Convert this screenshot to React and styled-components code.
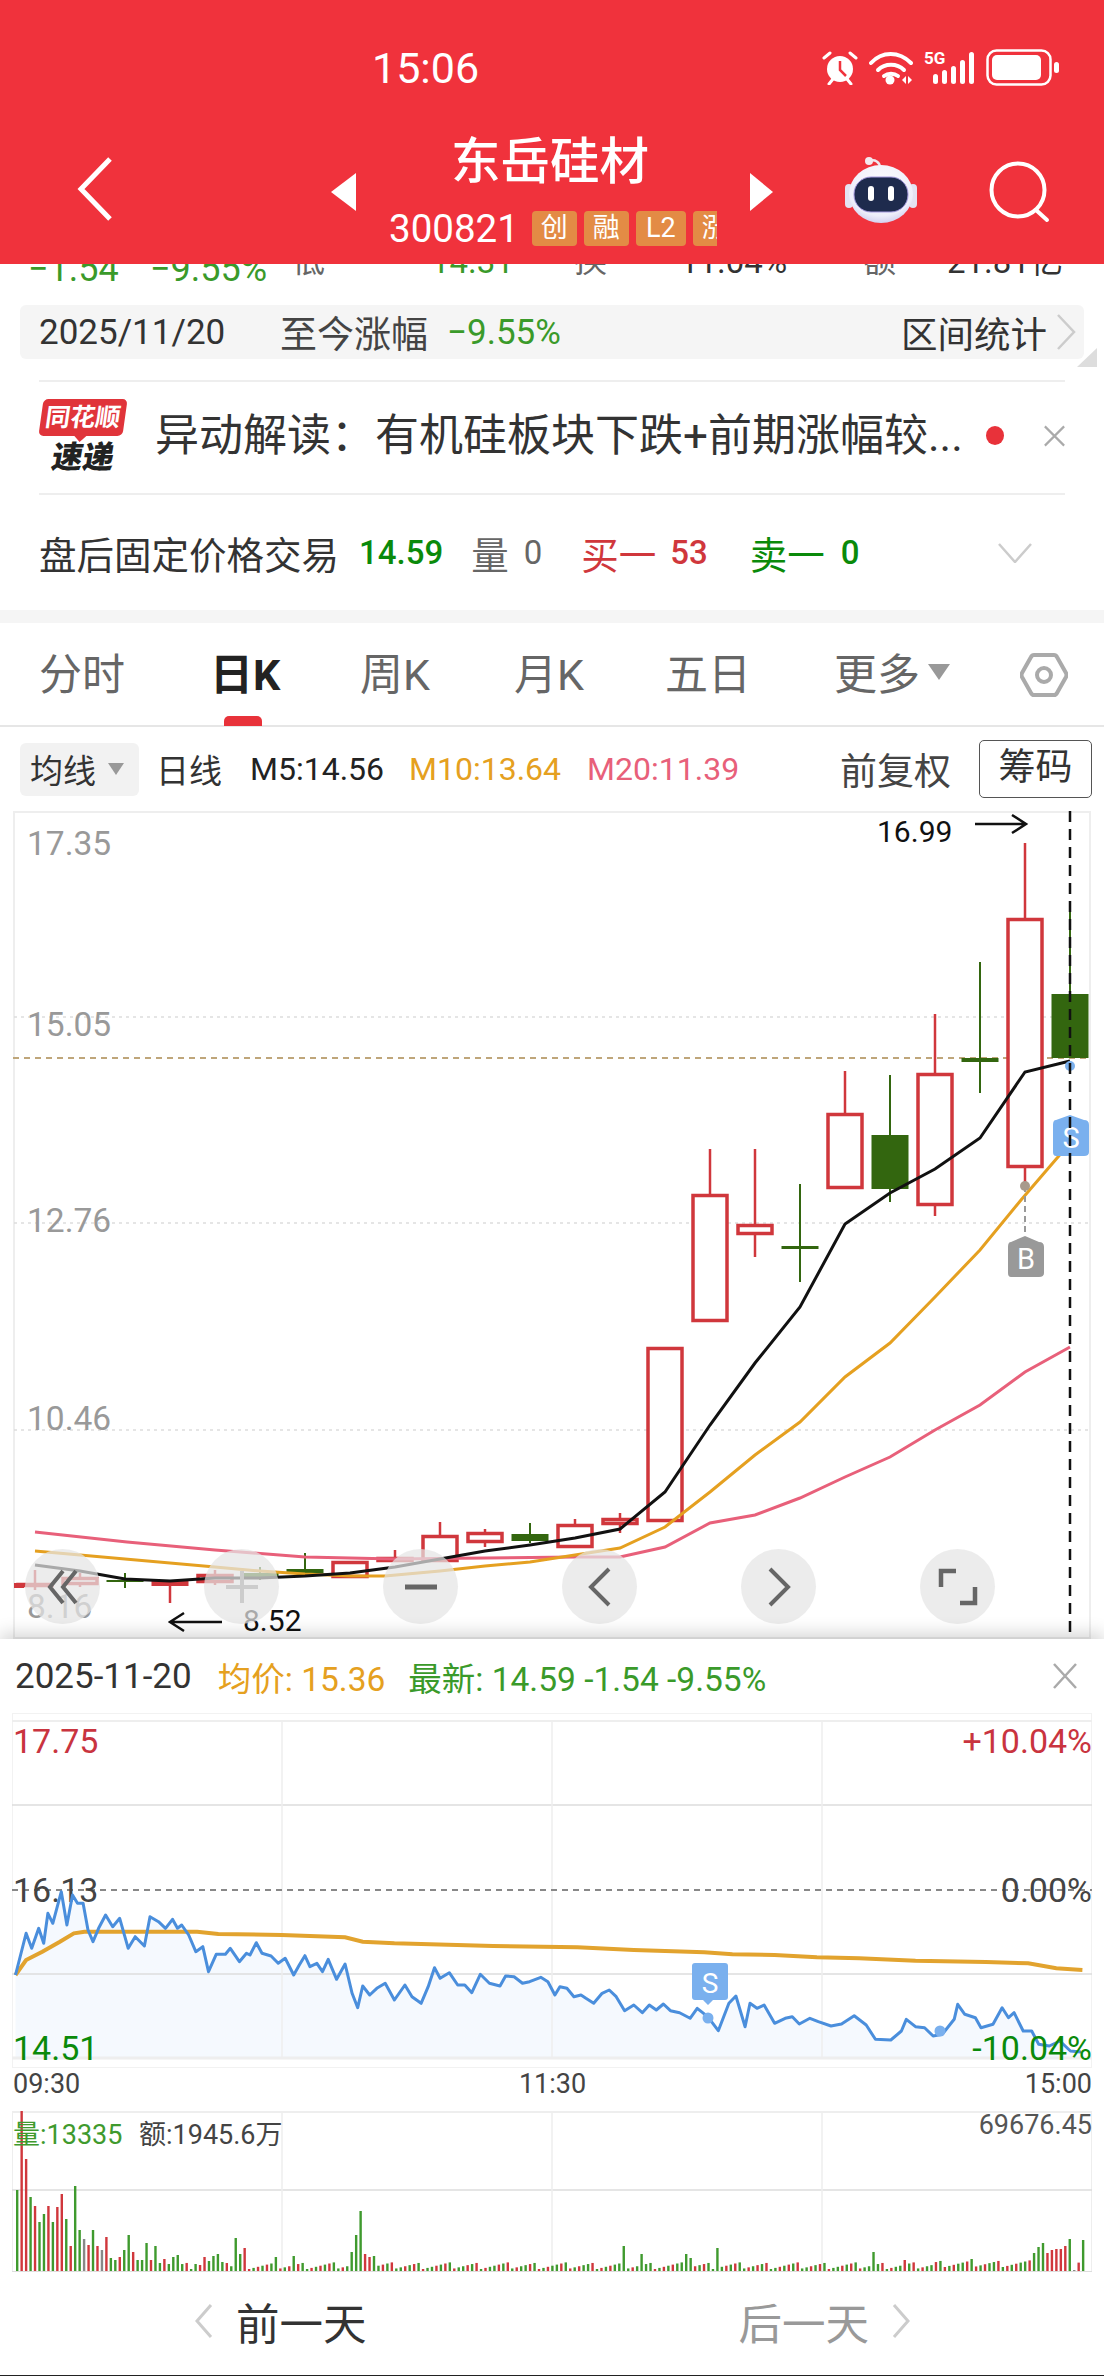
import React from 'react';
import styled, { createGlobalStyle } from 'styled-components';

const RED = '#d0373c';
const GREEN = '#33660f';
const FONT = 'Roboto, "Noto Sans CJK SC", sans-serif';

const GlobalStyle = createGlobalStyle`
  html, body { margin: 0; padding: 0; background: #fff; }
  body { font-family: ${FONT}; }
  * { box-sizing: border-box; }
`;

const Page = styled.div`
  width: 1104px;
  height: 2376px;
  overflow: hidden;
  display: flex;
  flex-direction: column;
  background: #fff;
  color: #333;
`;

const Header = styled.header`
  height: 264px;
  background: #f0323c;
  color: #fff;
  flex: none;
`;

const StatusBar = styled.div`
  height: 130px;
  display: flex;
  justify-content: space-between;
  align-items: flex-start;
  padding: 44px 44px 0 372px;
`;

const Clock = styled.span`
  font-size: 43px;
  line-height: 48px;
`;

const StatusIcons = styled.div`
  display: flex;
  align-items: flex-start;
  padding-top: 5px;
`;

const NavBar = styled.div`
  display: flex;
  align-items: flex-start;
  padding-left: 77px;
`;

const NavIcon = styled.svg`
  flex: none;
  margin-top: ${p => p.$top}px;
  margin-left: ${p => p.$left || 0}px;
`;

const TitleBlock = styled.div`
  width: 394px;
  flex: none;
  display: flex;
  flex-direction: column;
  align-items: center;
`;

const Title = styled.div`
  font-size: 49.5px;
  line-height: 56px;
  font-weight: 500;
  margin-top: 4px;
  margin-left: -6px;
`;

const CodeRow = styled.div`
  width: 328px;
  height: 35px;
  margin-top: 21px;
  display: flex;
  align-items: center;
  overflow: hidden;
  font-size: 38.5px;
  gap: 7px;
`;

const Code = styled.span`
  margin-right: 6px;
  flex: none;
`;

const Badge = styled.span`
  flex: none;
  width: ${p => p.$wide ? 50 : 45}px;
  height: 35px;
  border-radius: 4px;
  background: #e38b45;
  font-size: 27px;
  line-height: 35px;
  text-align: center;
  color: #fff;
`;

const ClippedRow = styled.div`
  height: 20px;
  flex: none;
  overflow: hidden;
  display: grid;
  grid-template-columns: 122px 142px 139px 143px 106px 183px 84px 1fr;
  grid-template-rows: 20px;
  align-items: end;
  padding-left: 28px;
  font-size: 33px;
`;

const ClippedCell = styled.span`
  line-height: 34px;
  font-size: ${p => p.$size || 33}px;
  white-space: nowrap;
  margin-bottom: ${p => p.$drop}px;
  color: ${p => p.$color || '#333'};
`;

const RangeBar = styled.div`
  height: 54px;
  flex: none;
  margin: 21px 20px 0;
  background: #f5f5f5;
  border-radius: 6px;
  display: flex;
  align-items: center;
  padding: 0 7px 0 19px;
  position: relative;
  font-size: 35px;
`;

const RangeDate = styled.span`
  width: 241px;
  color: #333;
`;

const RangeLabel = styled.span`
  font-size: 37px;
  color: #444;
`;

const RangeValue = styled.span`
  margin-left: 19px;
  color: #3a9a2a;
  font-size: 35px;
`;

const RangeStats = styled.span`
  margin-left: auto;
  font-size: 36.5px;
  color: #333;
`;

const CornerMark = styled.span`
  position: absolute;
  right: -13px;
  bottom: -8px;
  width: 0;
  height: 0;
  border-left: 20px solid transparent;
  border-bottom: 19px solid #ddd;
`;

const Divider = styled.div`
  height: 2px;
  flex: none;
  margin: 21px 39px 0;
  background: #eee;
`;

const NoticeRow = styled.div`
  height: 113px;
  flex: none;
  margin: 0 39px;
  border-bottom: 2px solid #eee;
  display: flex;
  align-items: center;
  padding-bottom: 4px;
`;

const Logo = styled.div`
  width: 88px;
  flex: none;
  display: flex;
  flex-direction: column;
  align-items: center;
`;

const LogoBubble = styled.div`
  width: 84px;
  height: 37px;
  background: #e0343a;
  border-radius: 5px;
  color: #fff;
  transform: skewX(-8deg);
  font-size: 25px;
  line-height: 37px;
  font-weight: 700;
  text-align: center;
  white-space: nowrap;
  position: relative;
  &::after {
    content: '';
    position: absolute;
    left: 35px;
    bottom: -6px;
    border-left: 7px solid transparent;
    border-right: 7px solid transparent;
    border-top: 7px solid #e0343a;
  }
`;

const LogoText = styled.div`
  margin-top: 7px;
  color: #222;
  font-size: 31px;
  line-height: 30px;
  font-weight: 900;
  transform: skewX(-10deg);
`;

const NoticeText = styled.div`
  margin-left: 28px;
  width: 815px;
  flex: none;
  font-size: 44px;
  line-height: 50px;
  white-space: nowrap;
  color: #333;
`;

const Dot = styled.span`
  width: 18px;
  height: 19px;
  margin-left: 16px;
  flex: none;
  border-radius: 50%;
  background: #e8323a;
`;

const TradeRow = styled.div`
  height: 115px;
  flex: none;
  display: flex;
  align-items: center;
  padding: 0 72px 0 39px;
  font-size: 33px;
  position: relative;
`;

const TradeLabel = styled.span`
  font-size: 37.5px;
  color: ${p => p.$color || '#333'};
  margin-left: ${p => p.$left || 0}px;
`;

const TradeValue = styled.span`
  color: ${p => p.$color};
  font-weight: ${p => p.$bold ? 500 : 400};
  margin-left: ${p => p.$left}px;
`;

const Band = styled.div`
  height: 13px;
  flex: none;
  background: #f5f5f5;
`;

const Tabs = styled.div`
  height: 104px;
  flex: none;
  border-bottom: 2px solid #e6e6e6;
  display: grid;
  grid-template-columns: 171px 150px 154px 151px 169px 186px 1fr;
  align-items: center;
  padding: 2px 39px 0 39px;
`;

const Tab = styled.div`
  position: relative;
  font-size: 43px;
  line-height: 52px;
  font-weight: ${p => p.$active ? 700 : 400};
  color: ${p => p.$active ? '#222' : '#666'};
  display: flex;
  align-items: center;
  &::after {
    content: '';
    display: ${p => p.$active ? 'block' : 'none'};
    position: absolute;
    left: 14px;
    bottom: -25px;
    width: 38px;
    height: 10px;
    border-radius: 5px 5px 0 0;
    background: #e8323a;
  }
`;

const Caret = styled.span`
  width: 0;
  height: 0;
  margin-left: ${p => p.$left}px;
  margin-top: ${p => p.$top || 0}px;
  border-left: ${p => p.$size}px solid transparent;
  border-right: ${p => p.$size}px solid transparent;
  border-top: ${p => p.$size * 1.5}px solid #999;
`;

const MaRow = styled.div`
  height: 84px;
  flex: none;
  display: flex;
  align-items: center;
  padding: 0 12px 0 20px;
  font-size: 32px;
`;

const MaSelect = styled.div`
  width: 119px;
  height: 53px;
  background: #f2f2f2;
  border-radius: 6px;
  display: flex;
  align-items: center;
  padding-left: 10px;
  font-size: 33px;
  color: #333;
`;

const MaLabel = styled.span`
  font-size: 33px;
  margin-left: 17px;
  color: #333;
`;

const MaValue = styled.span`
  color: ${p => p.$color};
  margin-left: ${p => p.$left}px;
`;

const AdjustLabel = styled.span`
  margin-left: auto;
  font-size: 37px;
  color: #444;
`;

const ChipButton = styled.div`
  width: 113px;
  height: 58px;
  margin-left: 28px;
  border: 1px solid #555;
  border-radius: 5px;
  font-size: 37px;
  line-height: 54px;
  text-align: center;
  color: #333;
`;

const ChartArea = styled.div`
  position: relative;
  height: 828px;
  flex: none;
`;

const Plot = styled.svg`
  display: block;
  font-family: ${FONT};
`;

const ChartControls = styled.div`
  position: absolute;
  left: 25px;
  top: 738px;
  display: flex;
  gap: 104px;
`;

const ControlButton = styled.div`
  width: 75px;
  height: 75px;
  border-radius: 50%;
  background: rgba(228, 228, 228, 0.72);
  display: flex;
  align-items: center;
  justify-content: center;
`;

const DetailPanel = styled.section`
  position: relative;
  flex: none;
  background: #fff;
  box-shadow: 0 -6px 16px rgba(0, 0, 0, 0.16);
`;

const DetailHead = styled.div`
  height: 74px;
  display: flex;
  align-items: center;
  padding: 0 27px 0 15px;
  font-size: 33.5px;
`;

const DetailDate = styled.span`
  font-size: 35px;
  color: #333;
`;

const DetailStat = styled.span`
  margin-left: ${p => p.$left}px;
  color: ${p => p.$color};
  white-space: nowrap;
`;

const CloseIcon = styled.svg`
  margin-left: auto;
  flex: none;
`;

const TimeAxis = styled.div`
  height: 43px;
  display: flex;
  justify-content: space-between;
  padding: 0 12px 0 13px;
  font-size: 27px;
  line-height: 32px;
  color: #444;
`;

const Footer = styled.div`
  height: 101px;
  border-bottom: 1px solid #222;
  display: flex;
  align-items: center;
  padding: 0 0 8px 194px;
  font-size: 43.5px;
`;

const DayButton = styled.div`
  display: flex;
  align-items: center;
  gap: ${p => p.$gap}px;
  margin-left: ${p => p.$left || 0}px;
  color: ${p => p.$muted ? '#999' : '#333'};
`;

// candles: x, wick top, wick bottom, body top, body bottom, colour
const candles = [
  [35, 1570, 1590, 1583, 1587, 'r'],
  [80, 1573, 1587, 1577, 1585, 'r'],
  [125, 1573, 1588, 1580, 1582, 'g'],
  [170, 1580, 1603, 1580, 1586, 'rf'],
  [215, 1570, 1585, 1574, 1583, 'r'],
  [260, 1567, 1580, 1573, 1577, 'g'],
  [305, 1553, 1575, 1569, 1573, 'g'],
  [350, 1561, 1578, 1561, 1578, 'r'],
  [395, 1550, 1562, 1557, 1562, 'r'],
  [440, 1522, 1562, 1535, 1562, 'r'],
  [485, 1529, 1547, 1532, 1543, 'r'],
  [530, 1523, 1543, 1534, 1541, 'g'],
  [575, 1519, 1548, 1524, 1548, 'r'],
  [620, 1513, 1533, 1518, 1525, 'r'],
  [665, 1347, 1522, 1347, 1522, 'r'],
  [710, 1149, 1322, 1194, 1322, 'r'],
  [755, 1149, 1257, 1224, 1235, 'r'],
  [800, 1184, 1282, 1246, 1249, 'g'],
  [845, 1071, 1189, 1113, 1189, 'r'],
  [890, 1075, 1202, 1135, 1189, 'g'],
  [935, 1014, 1216, 1073, 1206, 'r'],
  [980, 962, 1093, 1058, 1062, 'g'],
  [1025, 843, 1186, 918, 1168, 'r'],
  [1070, 907, 1058, 994, 1058, 'g'],
];

const ma5 = '35,1565 80,1571 125,1579 170,1581 215,1578 260,1578 305,1576 350,1573 395,1567 440,1559 485,1551 530,1545 575,1538 620,1529 665,1492 710,1425 755,1363 800,1307 845,1224 890,1193 935,1169 980,1138 1025,1072 1070,1061';
const ma10 = '35,1551 215,1567 260,1571 305,1574 350,1576 385,1576 440,1571 485,1566 530,1562 575,1555 620,1548 665,1527 710,1492 755,1455 800,1422 845,1377 890,1343 935,1297 980,1250 1021,1200 1070,1143';
const ma20 = '35,1532 127,1542 215,1550 305,1557 395,1559 485,1558 575,1557 620,1557 665,1547 710,1523 755,1515 800,1498 845,1477 890,1457 935,1430 980,1405 1025,1372 1070,1347';

// intraday price as traced: x scale 1.42, y scale 3 from 1620
const pricePts = [
  22,1065, 37,940, 45,985, 55,925, 62,970, 68,880, 75,910, 87,815, 95,915, 103,825, 110,850, 118,850, 125,930, 132,965, 140,925, 150,885, 160,920, 170,895, 182,985, 192,950, 205,978, 213,890, 225,905, 235,925, 245,898, 252,925, 258,915, 268,945, 278,995, 288,980, 296,1055, 307,1003, 320,1003, 327,985, 340,1025, 350,1000, 355,1005, 364,968, 372,1000, 385,1008, 395,1030, 405,1015, 417,1065, 425,1035, 433,1007, 440,1040, 450,1030, 458,1055, 466,1018, 478,1078, 490,1032, 500,1120, 508,1163, 515,1098, 525,1125, 535,1105, 547,1090, 560,1140, 575,1095, 585,1130, 598,1150, 608,1100, 617,1043, 625,1075, 638,1058, 650,1095, 660,1095, 670,1118, 682,1063, 695,1090, 710,1098, 718,1068, 730,1070, 742,1090, 752,1085, 768,1072, 778,1085, 788,1125, 795,1100, 805,1105, 815,1130, 825,1125, 832,1135, 843,1150, 855,1120, 865,1110, 875,1130, 887,1172, 900,1155, 912,1178, 922,1155, 932,1170, 942,1152, 952,1172, 965,1178, 980,1195, 990,1165, 1005,1190, 1020,1232, 1035,1150, 1045,1128, 1058,1220, 1065,1150, 1075,1165, 1085,1155, 1100,1210, 1115,1195, 1125,1190, 1135,1212, 1150,1195, 1162,1205, 1180,1218, 1195,1212, 1213,1187, 1230,1215, 1243,1258, 1265,1260, 1280,1233, 1287,1198, 1300,1220, 1313,1223, 1325,1248, 1338,1243, 1355,1198, 1360,1153, 1370,1183, 1385,1193, 1393,1223, 1410,1213, 1423,1163, 1432,1193, 1440,1178, 1453,1233, 1465,1233, 1475,1273, 1490,1278, 1505,1263, 1520,1293, 1535,1296,
];
const avgPts = [
  22,1065, 37,1020, 60,995, 85,965, 105,940, 120,935, 280,935, 310,942, 400,945, 490,952, 515,965, 560,970, 700,978, 820,982, 900,990, 1000,997, 1040,1003, 1100,1005, 1160,1012, 1220,1015, 1300,1022, 1400,1026, 1460,1030, 1500,1045, 1537,1050,
];

const traced = pts => {
  const out = [];
  for (let i = 0; i < pts.length; i += 2) {
    out.push(`${(pts[i] / 1.42).toFixed(1)},${(1620 + pts[i + 1] / 3).toFixed(1)}`);
  }
  return out.join(' ');
};

// first minutes of the volume pane, [colour, height]
const openVolume = [
  ['g', 81], ['r', 161], ['r', 112], ['g', 74], ['r', 65], ['g', 49], ['g', 57], ['r', 65], ['g', 49], ['r', 64],
  ['r', 77], ['g', 52], ['r', 25], ['g', 85], ['g', 41], ['n', 32], ['r', 26], ['g', 41], ['r', 25], ['n', 21],
  ['r', 34], ['g', 13], ['g', 11], ['r', 14], ['g', 21], ['g', 36], ['r', 19], ['g', 11], ['g', 11], ['g', 28],
  ['r', 11], ['g', 25], ['g', 8], ['r', 12], ['g', 7], ['g', 14], ['g', 16],
];
const volumeSpikes = {
  40: ['g', 7], 41: ['r', 6], 43: ['g', 10], 44: ['g', 15], 45: ['g', 17], 46: ['g', 9],
  42: ['r', 14], 47: ['r', 8], 49: ['g', 33], 50: ['g', 17], 51: ['r', 23], 58: ['g', 14], 62: ['g', 15],
  75: ['g', 19], 76: ['g', 36], 77: ['g', 60], 78: ['r', 17], 79: ['r', 14], 80: ['g', 15], 136: ['g', 25],
  140: ['g', 17], 150: ['g', 17], 151: ['g', 13], 157: ['g', 23], 192: ['g', 19], 199: ['r', 11], 214: ['g', 12],
  228: ['g', 18], 229: ['g', 24], 230: ['g', 28], 231: ['r', 18], 232: ['r', 21], 233: ['r', 22], 234: ['r', 22],
  235: ['r', 25], 236: ['g', 32], 237: ['n', 1], 239: ['g', 31],
};

const volumeBars = Array.from({ length: 240 }, (_, i) => {
  if (i < openVolume.length) return openVolume[i];
  if (volumeSpikes[i]) return volumeSpikes[i];
  const colour = (i * 31) % 7 < 3 ? 'r' : 'g';
  const base = i > 205 ? 4 : 2;
  return [colour, base + ((i * 7919) % 13) * 0.55];
});
const volColour = { r: '#d0373c', g: '#3f9a2e', n: '#888' };

const Alarm = () => (
  <svg width="36" height="34" viewBox="0 0 36 34" style={{ marginTop: 2 }}>
    <circle cx="18" cy="18" r="13" fill="#fff" />
    <path d="M18 10v9l6 6" fill="none" stroke="#f0323c" strokeWidth="2.5" />
    <path d="M2 7l6-5M34 7l-6-5M7 33l4-5M29 33l-4-5" stroke="#fff" strokeWidth="3" strokeLinecap="round" />
  </svg>
);

const Wifi = () => (
  <svg width="44" height="34" viewBox="0 0 44 34" style={{ marginLeft: 11, marginTop: 2 }}>
    <g fill="none" stroke="#fff" strokeWidth="4" strokeLinecap="round">
      <path d="M2 12C13 0 30 0 42 12" />
      <path d="M9 19c7-7 19-7 26 0" />
      <path d="M15 25c4-3 10-3 14 0" />
    </g>
    <circle cx="21" cy="29" r="4.5" fill="#fff" />
    <path d="M33 29l4-4v8zM39 25l4 4-4 4z" fill="#fff" />
  </svg>
);

const Signal = () => (
  <svg width="51" height="36" viewBox="0 0 51 36" style={{ marginLeft: 11, marginTop: 0 }}>
    <text x="0" y="15" fontSize="17" fontWeight="700" fill="#fff" fontFamily="Roboto, sans-serif">5G</text>
    <g fill="#fff">
      <rect x="9" y="25" width="5" height="10" rx="2.5" />
      <rect x="18" y="21" width="5" height="14" rx="2.5" />
      <rect x="27" y="17" width="5" height="18" rx="2.5" />
      <rect x="36" y="11" width="5" height="24" rx="2.5" />
      <rect x="45" y="3" width="5" height="32" rx="2.5" />
    </g>
  </svg>
);

const Battery = () => (
  <svg width="74" height="38" viewBox="0 0 74 38" style={{ marginLeft: 11 }}>
    <rect x="1.5" y="1.5" width="63" height="34" rx="9" fill="none" stroke="#fff" strokeWidth="2.5" />
    <rect x="6" y="6" width="49" height="25" rx="5" fill="#fff" />
    <rect x="68" y="13" width="5" height="11" rx="2.5" fill="#fff" />
  </svg>
);

const Robot = () => (
  <NavIcon $top={26} $left={72} width="72" height="68" viewBox="0 0 72 68">
    <defs>
      <radialGradient id="robotHead" cx="50%" cy="35%" r="70%">
        <stop offset="0%" stopColor="#ffffff" />
        <stop offset="75%" stopColor="#eeeefa" />
        <stop offset="100%" stopColor="#c9c6ec" />
      </radialGradient>
    </defs>
    <path d="M24 5c6-2 11 1 11 7" fill="none" stroke="#f0e8f0" strokeWidth="2.5" />
    <circle cx="24" cy="5" r="4" fill="#f4e8ee" />
    <rect x="0" y="28" width="8" height="24" rx="4" fill="#e4e2f2" />
    <rect x="64" y="28" width="8" height="24" rx="4" fill="#e4e2f2" />
    <ellipse cx="36" cy="38" rx="32" ry="29" fill="url(#robotHead)" />
    <rect x="9" y="21" width="54" height="35" rx="17" fill="#1e2b4d" stroke="#a79ce0" strokeWidth="1" />
    <rect x="23" y="30" width="6" height="15" rx="3" fill="#fff" />
    <rect x="43" y="30" width="6" height="15" rx="3" fill="#fff" />
  </NavIcon>
);

const Candle = ({ c }) => {
  const [x, wt, wb, bt, bb, kind] = c;
  const isGreen = kind === 'g';
  const colour = isGreen ? GREEN : RED;
  const thin = bb - bt < 6;
  return (
    <g>
      <line x1={x} x2={x} y1={wt} y2={wb} stroke={colour} strokeWidth={isGreen ? 2 : 2.5} />
      {isGreen || kind === 'rf' ? (
        <rect x={x - 18.5} y={bt} width="37" height={bb - bt} fill={colour} />
      ) : (
        <rect x={x - 17} y={bt + 1.5} width="34" height={Math.max(bb - bt - 3, 1)} fill={thin ? colour : '#fff'} stroke={colour} strokeWidth="3.5" />
      )}
    </g>
  );
};

const KChart = () => (
  <Plot width="1104" height="828" viewBox="0 811 1104 828">
    <rect x="14" y="812" width="1076" height="826" fill="#fff" stroke="#eee" strokeWidth="2" />
    {[1017, 1223, 1430].map(y => (
      <line key={y} x1="14" x2="1090" y1={y} y2={y} stroke="#ddd" strokeWidth="1.5" strokeDasharray="3 4" />
    ))}
    <line x1="13" x2="1090" y1="1058" y2="1058" stroke="#bfa67a" strokeWidth="2" strokeDasharray="6 5" />
    <g fontSize="33.5" fill="#999">
      <text x="27" y="855">17.35</text>
      <text x="27" y="1036">15.05</text>
      <text x="27" y="1232">12.76</text>
      <text x="27" y="1430">10.46</text>
      <text x="27" y="1618">8.16</text>
    </g>
    <rect x="14" y="1583" width="10" height="5" fill={RED} />
    {candles.map(c => <Candle key={c[0]} c={c} />)}
    <polyline points={ma20} fill="none" stroke="#e8607a" strokeWidth="3" />
    <polyline points={ma10} fill="none" stroke="#e5a020" strokeWidth="3" />
    <polyline points={ma5} fill="none" stroke="#111" strokeWidth="3" />

    <line x1="1025" x2="1025" y1="1186" y2="1236" stroke="#999" strokeWidth="2" strokeDasharray="6 4" />
    <circle cx="1025" cy="1186" r="5" fill="#a89a8c" />
    <path d="M1011 1242l14-6 14 6q5 0 5 5v26q0 4-5 4h-28q-3 0-3-4v-26q0-5 3-5z" fill="#999" />
    <text x="1026" y="1269" fontSize="29" fill="#fff" textAnchor="middle">B</text>

    <circle cx="1070" cy="1066" r="5" fill="#7ab0ee" />
    <path d="M1056 1120l14-5 14 5q5 0 5 5v27q0 4-5 4h-28q-3 0-3-4v-27q0-5 3-5z" fill="#7ab0ee" />
    <text x="1071" y="1148" fontSize="29" fill="#fff" textAnchor="middle">S</text>

    <line x1="1070" x2="1070" y1="811" y2="1639" stroke="#111" strokeWidth="2.5" strokeDasharray="11 7" />

    <text x="877" y="842" fontSize="30" fill="#111">16.99</text>
    <path d="M975 824h51M1012 815l14 9-14 9" fill="none" stroke="#111" strokeWidth="2.5" />
    <text x="243" y="1631" fontSize="30" fill="#111">8.52</text>
    <path d="M222 1622h-52M184 1613l-14 9 14 9" fill="none" stroke="#111" strokeWidth="2.5" />
  </Plot>
);

const IconStroke = ({ d, color = '#666', w = 4 }) => (
  <svg width="40" height="40" viewBox="0 0 40 40">
    <path d={d} fill="none" stroke={color} strokeWidth={w} />
  </svg>
);

const IntradayChart = () => (
  <Plot width="1104" height="355" viewBox="0 1713 1104 355">
    <rect x="12.5" y="1713.5" width="1079" height="354" fill="#fff" stroke="#f2f2f2" />
    <polygon points={`15.5,2058 ${traced(pricePts)} 1081,2058`} fill="#f5f9fe" />
    <line x1="12" x2="1092" y1="1721" y2="1721" stroke="#eee" strokeWidth="2" />
    <line x1="12" x2="1092" y1="1805" y2="1805" stroke="#ddd" strokeWidth="1.5" />
    <line x1="12" x2="1092" y1="1974" y2="1974" stroke="#ddd" strokeWidth="1.5" />
    {[282, 552, 822].map(x => (
      <line key={x} x1={x} x2={x} y1="1721" y2="2058" stroke="#eee" strokeWidth="1.5" />
    ))}
    <line x1="12" x2="1092" y1="2058" y2="2058" stroke="#eee" strokeWidth="3" />
    <line x1="12" x2="1092" y1="1890" y2="1890" stroke="#888" strokeWidth="2" strokeDasharray="6 5" />
    <g fontSize="34">
      <text x="13" y="1753" fill="#c9343f">17.75</text>
      <text x="1092" y="1753" fill="#c9343f" textAnchor="end">+10.04%</text>
      <text x="13" y="1902" fill="#444">16.13</text>
      <text x="1092" y="1902" fill="#444" textAnchor="end">0.00%</text>
      <text x="13" y="2060" fill="#0a8a0a">14.51</text>
    </g>
    <polyline points={traced(avgPts)} fill="none" stroke="#e2a32e" strokeWidth="4" />
    <polyline points={traced(pricePts)} fill="none" stroke="#4a8edc" strokeWidth="3" strokeLinejoin="round" />
    <text x="1092" y="2060" fontSize="34" fill="#0a8a0a" textAnchor="end">-10.04%</text>
    <circle cx="708" cy="2018" r="5.5" fill="#7ab0ee" />
    <circle cx="940" cy="2031" r="5.5" fill="#7ab0ee" />
    <path d="M695 1963h30q3 0 3 3v31q0 3-3 3h-12l-5 5-5-5h-8q-3 0-3-3v-31q0-3 3-3z" fill="#7ab0ee" />
    <text x="710" y="1993" fontSize="28" fill="#fff" textAnchor="middle">S</text>
  </Plot>
);

const VolumeChart = () => (
  <Plot width="1104" height="164" viewBox="0 2111 1104 164">
    <line x1="12" x2="1092" y1="2112" y2="2112" stroke="#eee" strokeWidth="2" />
    <line x1="12.5" x2="12.5" y1="2111" y2="2271" stroke="#eee" />
    <line x1="1091.5" x2="1091.5" y1="2111" y2="2271" stroke="#eee" />
    <line x1="12" x2="1092" y1="2190" y2="2190" stroke="#ddd" strokeWidth="1.5" />
    {[282, 552, 822].map(x => (
      <line key={x} x1={x} x2={x} y1="2111" y2="2271" stroke="#eee" strokeWidth="1.5" />
    ))}
    {volumeBars.map(([c, h], i) => (
      <rect key={i} x={16 + i * 4.46} y={2271 - h} width="2.4" height={h} fill={volColour[c]} />
    ))}
    <line x1="12" x2="1092" y1="2271.5" y2="2271.5" stroke="#ddd" />
    <text x="13" y="2144" fontSize="27" fill="#3f9a2e">量:13335</text>
    <text x="139" y="2144" fontSize="27" fill="#444">额:1945.6万</text>
    <text x="1092" y="2134" fontSize="27" fill="#555" textAnchor="end">69676.45</text>
  </Plot>
);

const App = () => (
  <Page>
    <GlobalStyle />
    <Header>
      <StatusBar>
        <Clock>15:06</Clock>
        <StatusIcons>
          <Alarm />
          <Wifi />
          <Signal />
          <Battery />
        </StatusIcons>
      </StatusBar>
      <NavBar>
        <NavIcon $top={27} width="36" height="64" viewBox="0 0 36 64">
          <path d="M33 2L4 32l29 30" fill="none" stroke="#fff" strokeWidth="5" />
        </NavIcon>
        <NavIcon $top={43} $left={218} width="25" height="38" viewBox="0 0 25 38">
          <path d="M25 0v38L0 19z" fill="#fff" />
        </NavIcon>
        <TitleBlock>
          <Title>东岳硅材</Title>
          <CodeRow>
            <Code>300821</Code>
            <Badge>创</Badge>
            <Badge>融</Badge>
            <Badge $wide>L2</Badge>
            <Badge>涨</Badge>
          </CodeRow>
        </TitleBlock>
        <NavIcon $top={43} width="23" height="38" viewBox="0 0 23 38">
          <path d="M0 0v38l23-19z" fill="#fff" />
        </NavIcon>
        <Robot />
        <NavIcon $top={31} $left={72} width="62" height="62" viewBox="0 0 62 62">
          <circle cx="29" cy="29" r="26.5" fill="none" stroke="#fff" strokeWidth="4" />
          <path d="M47 49l11 10" stroke="#fff" strokeWidth="4" strokeLinecap="round" />
        </NavIcon>
      </NavBar>
    </Header>

    <ClippedRow>
      <ClippedCell $color="#3a9a2a" $size={36} $drop={-2}>−1.54</ClippedCell>
      <ClippedCell $color="#3a9a2a" $size={36} $drop={-2}>−9.55%</ClippedCell>
      <ClippedCell $color="#666" $drop={6}>低</ClippedCell>
      <ClippedCell $color="#3a9a2a" $drop={5}>14.31</ClippedCell>
      <ClippedCell $color="#666" $drop={6}>换</ClippedCell>
      <ClippedCell $drop={5}>11.04%</ClippedCell>
      <ClippedCell $color="#666" $drop={6}>额</ClippedCell>
      <ClippedCell $drop={5}>21.81亿</ClippedCell>
    </ClippedRow>

    <RangeBar>
      <RangeDate>2025/11/20</RangeDate>
      <RangeLabel>至今涨幅</RangeLabel>
      <RangeValue>−9.55%</RangeValue>
      <RangeStats>区间统计</RangeStats>
      <svg width="22" height="36" viewBox="0 0 22 36" style={{ marginLeft: 8 }}>
        <path d="M3 1l16 17L3 35" fill="none" stroke="#ccc" strokeWidth="2.5" />
      </svg>
      <CornerMark />
    </RangeBar>

    <Divider />

    <NoticeRow>
      <Logo>
        <LogoBubble>同花顺</LogoBubble>
        <LogoText>速递</LogoText>
      </Logo>
      <NoticeText>异动解读：有机硅板块下跌+前期涨幅较...</NoticeText>
      <Dot />
      <svg width="24" height="24" viewBox="0 0 24 24" style={{ marginLeft: 40 }}>
        <path d="M1 1l22 22M23 1L1 23" fill="none" stroke="#aaa" strokeWidth="2.5" />
      </svg>
    </NoticeRow>

    <TradeRow>
      <TradeLabel>盘后固定价格交易</TradeLabel>
      <TradeValue $color="#0a8a0a" $bold $left={20}>14.59</TradeValue>
      <TradeLabel $color="#666" $left={28}>量</TradeLabel>
      <TradeValue $color="#666" $left={15}>0</TradeValue>
      <TradeLabel $color={RED} $left={39}>买一</TradeLabel>
      <TradeValue $color={RED} $bold $left={14}>53</TradeValue>
      <TradeLabel $color="#0a8a0a" $left={42}>卖一</TradeLabel>
      <TradeValue $color="#0a8a0a" $bold $left={16}>0</TradeValue>
      <svg width="34" height="20" viewBox="0 0 34 20" style={{ marginLeft: 'auto' }}>
        <path d="M1 1l16 18L33 1" fill="none" stroke="#ccc" strokeWidth="2.5" />
      </svg>
    </TradeRow>

    <Band />

    <Tabs>
      <Tab>分时</Tab>
      <Tab $active>日K</Tab>
      <Tab>周K</Tab>
      <Tab>月K</Tab>
      <Tab>五日</Tab>
      <Tab>更多<Caret $size={11} $left={8} $top={-6} /></Tab>
      <svg width="48" height="44" viewBox="0 0 48 44">
        <path d="M14 2h20q2 0 3 2l9 16q1 2 0 4l-9 16q-1 2-3 2H14q-2 0-3-2L2 24q-1-2 0-4l9-16q1-2 3-2z" fill="none" stroke="#aaa" strokeWidth="4" />
        <circle cx="24" cy="22" r="7" fill="none" stroke="#aaa" strokeWidth="4" />
      </svg>
    </Tabs>

    <MaRow>
      <MaSelect>均线<Caret $size={8} $left={12} /></MaSelect>
      <MaLabel>日线</MaLabel>
      <MaValue $color="#222" $left={28}>M5:14.56</MaValue>
      <MaValue $color="#e5a020" $left={25}>M10:13.64</MaValue>
      <MaValue $color="#e8607a" $left={26}>M20:11.39</MaValue>
      <AdjustLabel>前复权</AdjustLabel>
      <ChipButton>筹码</ChipButton>
    </MaRow>

    <ChartArea>
      <KChart />
      <ChartControls>
        <ControlButton><IconStroke d="M20 4L7 20l13 16M33 4L20 20l13 16" /></ControlButton>
        <ControlButton><IconStroke d="M4 20h32M20 4v32" color="#ccc" /></ControlButton>
        <ControlButton><IconStroke d="M4 20h32" w="5" /></ControlButton>
        <ControlButton><IconStroke d="M29 2L11 20l18 18" /></ControlButton>
        <ControlButton><IconStroke d="M11 2l18 18-18 18" /></ControlButton>
        <ControlButton><IconStroke d="M18 4H3v16M22 36h15V20" w="4.5" /></ControlButton>
      </ChartControls>
    </ChartArea>

    <DetailPanel>
      <DetailHead>
        <DetailDate>2025-11-20</DetailDate>
        <DetailStat $left={26} $color="#e5a020">均价: 15.36</DetailStat>
        <DetailStat $left={23} $color="#3a9a2a">最新: 14.59 -1.54 -9.55%</DetailStat>
        <CloseIcon width="24" height="26" viewBox="0 0 24 26">
          <path d="M1 1l22 24M23 1L1 25" fill="none" stroke="#aaa" strokeWidth="2.5" />
        </CloseIcon>
      </DetailHead>
      <IntradayChart />
      <TimeAxis>
        <span>09:30</span>
        <span>11:30</span>
        <span>15:00</span>
      </TimeAxis>
      <VolumeChart />
      <Footer>
        <DayButton $gap={23}>
          <svg width="19" height="34" viewBox="0 0 19 34">
            <path d="M17 1L3 17l14 16" fill="none" stroke="#ccc" strokeWidth="3" />
          </svg>
          <span>前一天</span>
        </DayButton>
        <DayButton $muted $gap={23} $left={372}>
          <span>后一天</span>
          <svg width="19" height="34" viewBox="0 0 19 34">
            <path d="M2 1l14 16L2 33" fill="none" stroke="#ccc" strokeWidth="3" />
          </svg>
        </DayButton>
      </Footer>
    </DetailPanel>
  </Page>
);

export default App;
